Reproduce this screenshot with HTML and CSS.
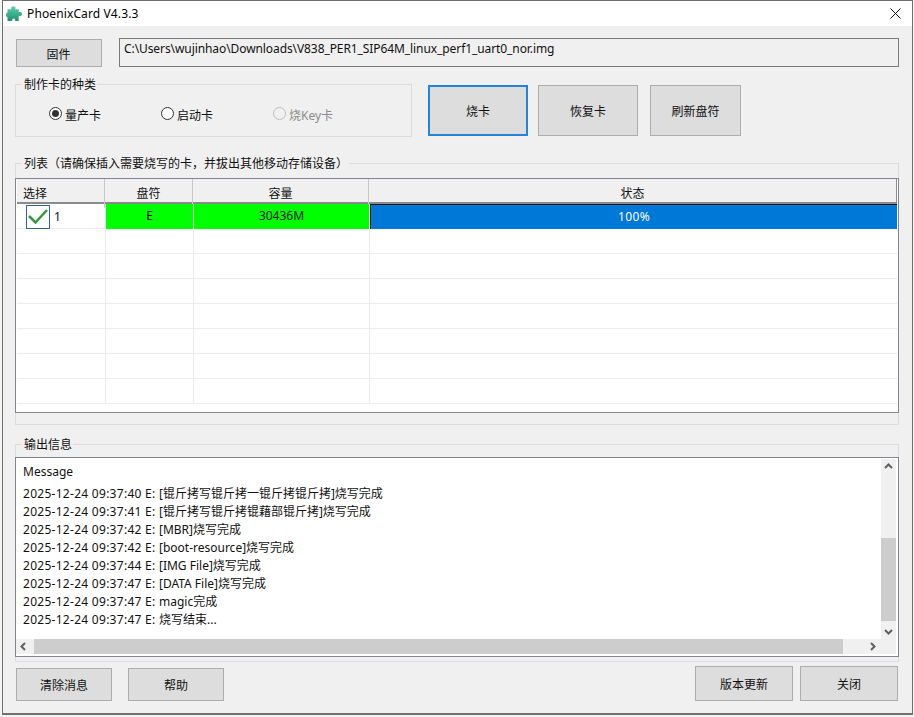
FILE: index.html
```html
<!DOCTYPE html>
<html lang="zh">
<head>
<meta charset="utf-8">
<title>PhoenixCard V4.3.3</title>
<link rel="stylesheet" href="styles.css">
</head>
<body>
<div class="window">
  <header class="titlebar">
    <svg class="app-icon" viewBox="0 0 16 16" width="16" height="16"><defs><linearGradient id="g" x1="0" y1="0" x2="0" y2="1"><stop offset="0" stop-color="#5fd0ae"/><stop offset="1" stop-color="#228f70"/></linearGradient></defs><path d="M5.500 .900C6.300 0 8.500 0 9.200 .900c.5.700.3 1.500 0 2.300h3.500v3c1-.5 3.300-.3 3.300 1.800s-2.300 2.300-3.300 1.800V15H9c.5-1.100 0-2.400-1.300-2.400S5.900 13.900 6.400 15H1.500v-3.800C.8 11.300 0 10.300 0 8.800s.8-2.400 1.500-2.200V3.200h3.800c-.3-.8-.3-1.600.2-2.300z" fill="url(#g)"/></svg>
    <span class="title">PhoenixCard V4.3.3</span>
    <svg class="close" viewBox="0 0 11 11" width="11" height="11"><path d="M.5.500l10 10M10.500.500l-10 10" stroke="#111" stroke-width="1" fill="none"/></svg>
  </header>
  <main class="content">
    <div class="row-file">
      <button class="btn btn-fw">固件</button>
      <div class="path">C:\Users\wujinhao\Downloads\V838_PER1_SIP64M_linux_perf1_uart0_nor.img</div>
    </div>
    <div class="row-mode">
      <section class="group group-mode">
        <span class="legend">制作卡的种类</span>
        <div class="radios">
          <label class="radio"><span class="dot on"></span>量产卡</label>
          <label class="radio"><span class="dot"></span>启动卡</label>
          <label class="radio off"><span class="dot"></span>烧Key卡</label>
        </div>
      </section>
      <button class="btn btn-burn">烧卡</button>
      <button class="btn btn-restore">恢复卡</button>
      <button class="btn btn-refresh">刷新盘符</button>
    </div>
    <section class="group group-list">
      <span class="legend">列表（请确保插入需要烧写的卡，并拔出其他移动存储设备）</span>
      <div class="list">
        <div class="list-row head">
          <div class="cell left">选择</div><div class="cell">盘符</div><div class="cell">容量</div><div class="cell">状态</div>
        </div>
        <div class="list-row first">
          <div class="cell pick"><svg class="check" viewBox="0 0 24 24" width="24" height="24"><rect x=".5" y=".5" width="23" height="23" fill="#fff" stroke="#2c6496"/><path d="M3 11l6.500 6.500L21 5" fill="none" stroke="#36983e" stroke-width="2.500"/></svg><span>1</span></div>
          <div class="cell green">E</div><div class="cell green">30436M</div><div class="cell blue">100%</div>
        </div>
        <div class="list-row"><div class="cell"></div><div class="cell"></div><div class="cell"></div><div class="cell"></div></div>
        <div class="list-row"><div class="cell"></div><div class="cell"></div><div class="cell"></div><div class="cell"></div></div>
        <div class="list-row"><div class="cell"></div><div class="cell"></div><div class="cell"></div><div class="cell"></div></div>
        <div class="list-row"><div class="cell"></div><div class="cell"></div><div class="cell"></div><div class="cell"></div></div>
        <div class="list-row"><div class="cell"></div><div class="cell"></div><div class="cell"></div><div class="cell"></div></div>
        <div class="list-row"><div class="cell"></div><div class="cell"></div><div class="cell"></div><div class="cell"></div></div>
        <div class="list-row"><div class="cell"></div><div class="cell"></div><div class="cell"></div><div class="cell"></div></div>
      </div>
    </section>
    <section class="group group-log">
      <span class="legend">输出信息</span>
      <div class="logbox">
        <div class="log-main">
          <div class="log-text">
            <div class="log-head">Message</div>
            <div class="log-line"><span class="stamp">2025-12-24 09:37:40 E: </span>[锟斤拷写锟斤拷一锟斤拷锟斤拷]烧写完成</div>
            <div class="log-line"><span class="stamp">2025-12-24 09:37:41 E: </span>[锟斤拷写锟斤拷锟藉部锟斤拷]烧写完成</div>
            <div class="log-line"><span class="stamp">2025-12-24 09:37:42 E: </span>[MBR]烧写完成</div>
            <div class="log-line"><span class="stamp">2025-12-24 09:37:42 E: </span>[boot-resource]烧写完成</div>
            <div class="log-line"><span class="stamp">2025-12-24 09:37:44 E: </span>[IMG File]烧写完成</div>
            <div class="log-line"><span class="stamp">2025-12-24 09:37:47 E: </span>[DATA File]烧写完成</div>
            <div class="log-line"><span class="stamp">2025-12-24 09:37:47 E: </span>magic完成</div>
            <div class="log-line"><span class="stamp">2025-12-24 09:37:47 E: </span>烧写结束...</div>
          </div>
          <div class="vbar">
            <svg class="arrow" viewBox="0 0 15 15" width="15" height="15"><path d="M4 9l3.500-3.500L11 9" fill="none" stroke="#606060" stroke-width="2"/></svg>
            <div class="vtrack"><div class="vthumb"></div></div>
            <svg class="arrow" viewBox="0 0 15 15" width="15" height="15"><path d="M4 6l3.500 3.500L11 6" fill="none" stroke="#606060" stroke-width="2"/></svg>
          </div>
        </div>
        <div class="hbar">
          <svg class="arrow" viewBox="0 0 15 15" width="15" height="15"><path d="M9 4L5.500 7.500 9 11" fill="none" stroke="#606060" stroke-width="2"/></svg>
          <div class="hthumb"></div>
          <svg class="arrow arrow-end" viewBox="0 0 15 15" width="15" height="15"><path d="M6 4l3.500 3.500L6 11" fill="none" stroke="#606060" stroke-width="2"/></svg>
        </div>
      </div>
    </section>
    <footer class="row-foot">
      <button class="btn btn-foot">清除消息</button>
      <button class="btn btn-foot">帮助</button>
      <button class="btn btn-foot-r push">版本更新</button>
      <button class="btn btn-foot-r">关闭</button>
    </footer>
  </main>
</div>
</body>
</html>
```
FILE: styles.css
```css
* { box-sizing: border-box; }
html, body { margin: 0; padding: 0; }
body {
  width: 914px;
  height: 717px;
  overflow: hidden;
  background: #f4f4f4;
  font-family: "Noto Sans", "Noto Sans CJK SC", sans-serif;
  font-size: 12px;
  color: #111;
}
.window {
  width: 911px;
  height: 715px;
  margin-left: 2px;
  border: 1px solid #6f6f6f;
  border-width: 1px 1px 2px 1px;
  background: #f0f0f0;
}
.titlebar {
  height: 25px;
  background: #fff;
  display: flex;
  align-items: center;
  padding-left: 3px;
}
.app-icon { flex: none; }
.title { margin-left: 5px; font-size: 12px; letter-spacing: .12px; color: #000; }
.close { margin-left: auto; margin-right: 11px; }
.content { padding: 12px 13px 0 12px; }
.btn {
  background: #dddddd;
  border: 1px solid #adadad;
  font: inherit;
  color: #111;
  padding: 0;
}
.row-file { display: flex; height: 29px; }
.btn-fw { width: 86px; height: 28px; margin: 1px 0 0 1px; padding: 1px 1px 0 0; }
.path {
  flex: 1;
  margin-left: 17px;
  border: 1px solid #7a7a7a;
  padding: 1px 0 0 4px;
  letter-spacing: -.085px;
  color: #111;
}
.row-mode { display: flex; margin-top: 17px; height: 53px; }
.group { border: 1px solid #dcdcdc; position: relative; }
.legend {
  position: absolute;
  left: 6px;
  top: -8px;
  padding: 0 1px 0 2px;
  background: #f0f0f0;
  line-height: 16px;
  white-space: nowrap;
}
.group-mode { width: 397px; height: 53px; }
.radios { display: flex; padding: 20px 0 0 33px; }
.radio { width: 112px; display: flex; align-items: center; height: 20px; }
.radio.off { color: #8a8a8a; }
.dot {
  width: 13px;
  height: 13px;
  border-radius: 50%;
  border: 1px solid #333;
  background: #fff;
  margin: 0 3px 4px 0;
  position: relative;
}
.dot.on::after {
  content: "";
  position: absolute;
  left: 2px;
  top: 2px;
  width: 7px;
  height: 7px;
  border-radius: 50%;
  background: #333;
}
.radio.off .dot { border-color: #bcbcbc; background: #f0f0f0; }
.btn-burn { width: 100px; height: 51px; margin: 1px 0 0 16px; border: 2px solid #2286d8; }
.btn-restore { width: 100px; height: 51px; margin: 1px 0 0 10px; }
.btn-refresh { width: 91px; height: 51px; margin: 1px 0 0 12px; }
.group-list { margin-top: 26px; width: 884px; height: 262px; padding-top: 14px; }
.list {
  margin-left: -1px;
  width: 884px;
  height: 235px;
  border: 1px solid #82878f;
  background: #fff;
  overflow: hidden;
  padding: 0 1px;
}
.list-row {
  display: grid;
  grid-template-columns: 89px 88px 176px 1fr;
  height: 25px;
  border-bottom: 1px solid #ececec;
}
.cell { border-right: 1px solid #ececec; text-align: center; line-height: 24px; }
.cell:last-child { border-right: 0; }
.head {
  grid-template-columns: 88px 88px 176px 1fr;
  height: 25px;
  background: #f0f0f0;
  border-bottom: 2px solid #8a8a8a;
}
.head .cell { border-right: 1px solid #c8c8c8; line-height: 29px; }
.head .cell:last-child { border-right: 1px solid #8a8a8a; }
.head .left { text-align: left; padding-left: 6px; }
.first { height: 25px; }
.pick { display: flex; align-items: center; padding-left: 9px; gap: 4px; }
.check { flex: none; }
.green { background: #00ff00; color: #111; }
.blue {
  background: #0078d7;
  color: #fff;
  border-top: 1px solid #111;
  border-left: 1px solid #111;
  letter-spacing: .4px;
}
.group-log { margin-top: 19px; width: 884px; height: 218px; padding-top: 12px; }
.logbox {
  margin-left: -1px;
  width: 884px;
  height: 200px;
  border: 1px solid #82878f;
  background: #fff;
  padding: 1px 2px 1px 0;
}
.log-main { display: flex; height: 180px; }
.log-text { flex: 1; padding: 4px 0 0 7px; line-height: 18px; }
.log-head { height: 22px; }
.log-line { height: 18px; white-space: nowrap; }
.stamp { letter-spacing: .28px; }
.vbar { width: 15px; background: #f0f0f0; display: flex; flex-direction: column; }
.arrow { flex: none; display: block; }
.vtrack { flex: 1; padding-top: 64px; }
.vthumb { height: 83px; background: #cdcdcd; }
.hbar { height: 15px; background: #f0f0f0; display: flex; }
.hthumb { width: 809px; margin-left: 3px; background: #cdcdcd; }
.arrow-end { margin-left: auto; margin-right: 16px; }
.row-foot { display: flex; margin-top: 4px; height: 35px; padding: 0 1px; align-items: flex-end; }
.btn-foot { width: 96px; height: 33px; margin-right: 16px; }
.btn-foot-r { width: 98px; height: 35px; margin-left: 7px; }
.btn-foot-r.push { margin-left: auto; }
```
